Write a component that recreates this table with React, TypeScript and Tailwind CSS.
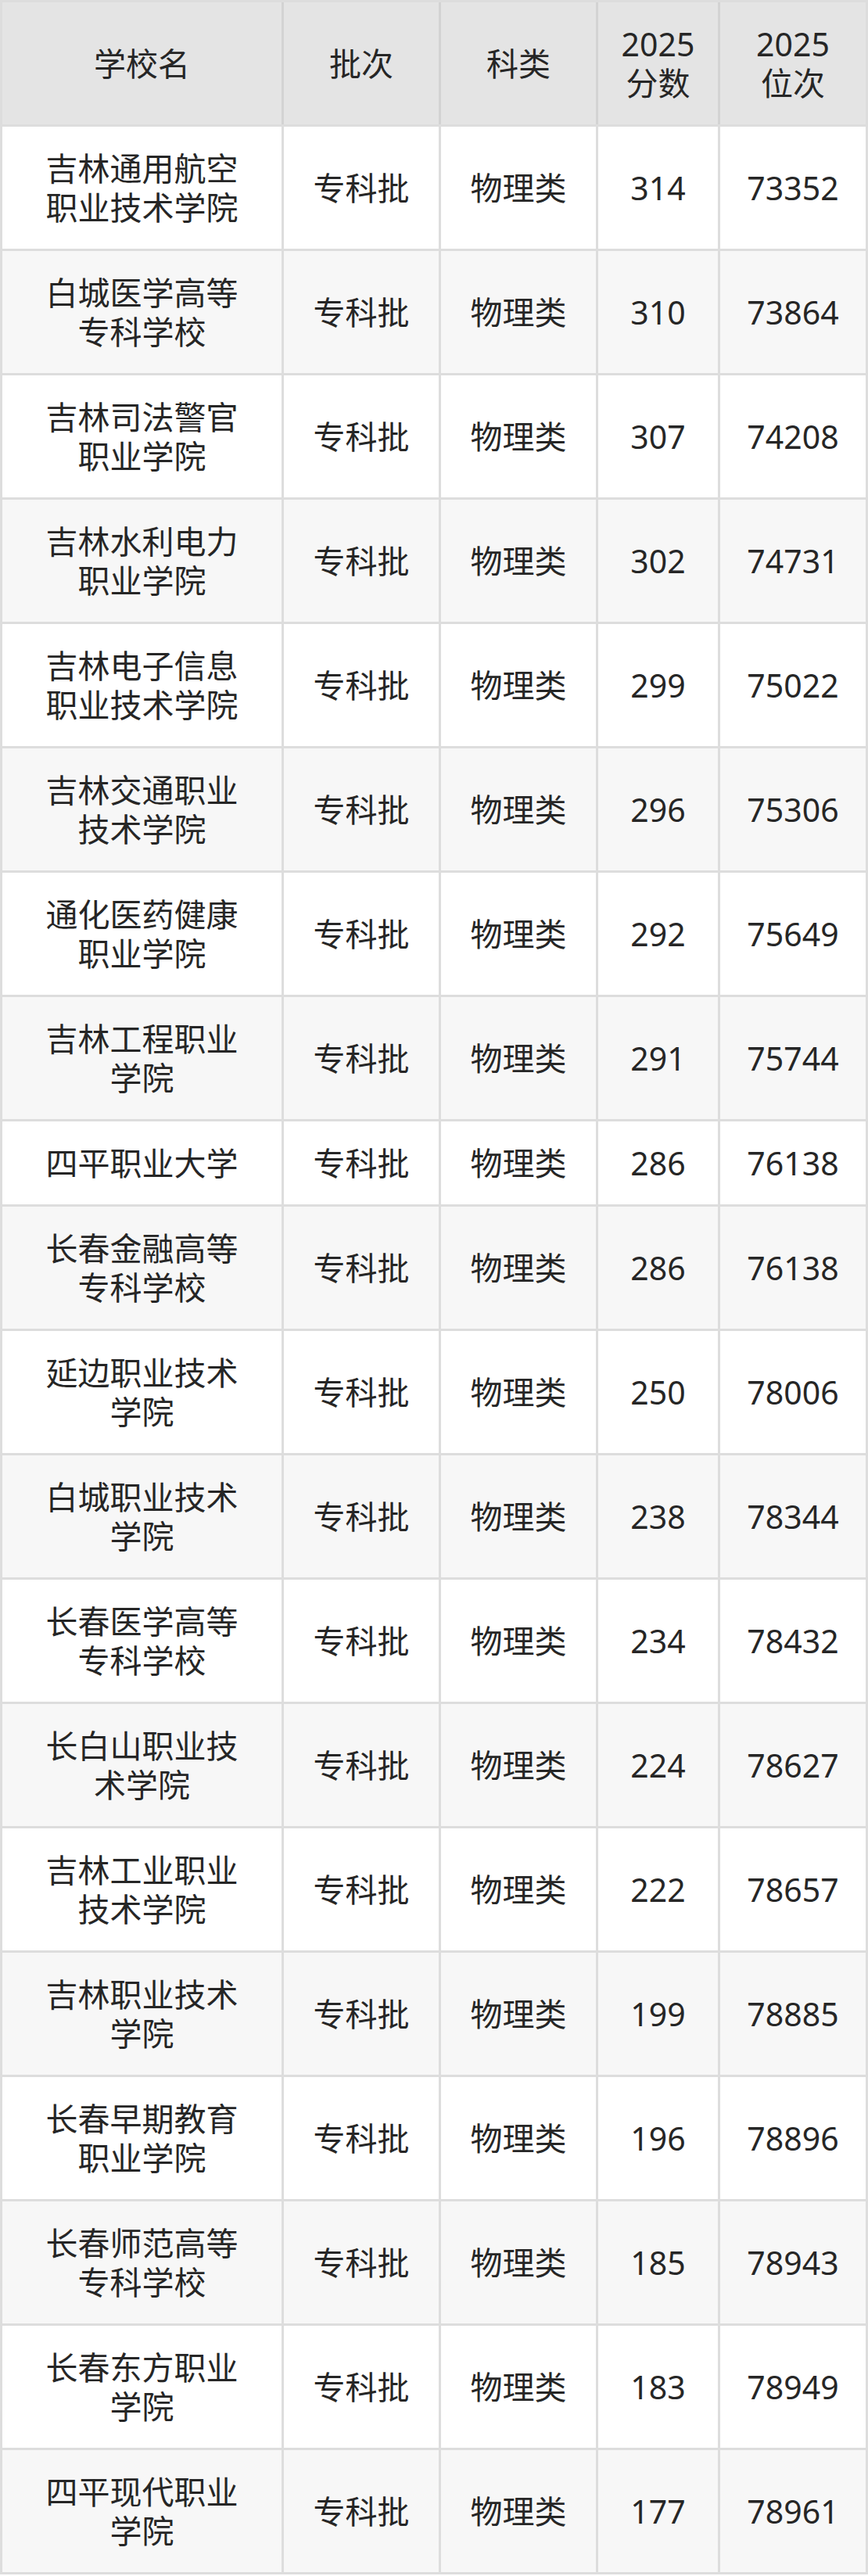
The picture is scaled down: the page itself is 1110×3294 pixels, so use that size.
import React from "react";

const rows: [string, string, string][] = [
  ["吉林通用航空职业技术学院", "314", "73352"],
  ["白城医学高等专科学校", "310", "73864"],
  ["吉林司法警官职业学院", "307", "74208"],
  ["吉林水利电力职业学院", "302", "74731"],
  ["吉林电子信息职业技术学院", "299", "75022"],
  ["吉林交通职业技术学院", "296", "75306"],
  ["通化医药健康职业学院", "292", "75649"],
  ["吉林工程职业学院", "291", "75744"],
  ["四平职业大学", "286", "76138"],
  ["长春金融高等专科学校", "286", "76138"],
  ["延边职业技术学院", "250", "78006"],
  ["白城职业技术学院", "238", "78344"],
  ["长春医学高等专科学校", "234", "78432"],
  ["长白山职业技术学院", "224", "78627"],
  ["吉林工业职业技术学院", "222", "78657"],
  ["吉林职业技术学院", "199", "78885"],
  ["长春早期教育职业学院", "196", "78896"],
  ["长春师范高等专科学校", "185", "78943"],
  ["长春东方职业学院", "183", "78949"],
  ["四平现代职业学院", "177", "78961"],
];

const grid = "grid grid-cols-[357px_198px_198px_153px_186px] gap-x-[3px]";
const cell = "flex items-center justify-center text-center py-[28px] leading-[50px]";

export default function App() {
  return (
    <div
      className="w-[1110px] bg-[#dddddd] p-[3px] flex flex-col gap-y-[3px] text-[41px] text-[#262626]"
      style={{ fontFamily: '"Noto Sans", "Noto Sans CJK SC", sans-serif' }}
    >
      <div className={`${grid} bg-[#d3d3d3]`}>
        <div className={`${cell} bg-[#e4e4e4] px-[40px]`}>学校名</div>
        <div className={`${cell} bg-[#e4e4e4]`}>批次</div>
        <div className={`${cell} bg-[#e4e4e4]`}>科类</div>
        <div className={`${cell} bg-[#e4e4e4]`}>
          2025
          <br />
          分数
        </div>
        <div className={`${cell} bg-[#e4e4e4]`}>
          2025
          <br />
          位次
        </div>
      </div>
      {rows.map(([name, score, rank], i) => {
        const bg = i % 2 === 0 ? "bg-white" : "bg-[#f7f7f7]";
        return (
          <div key={i} className={grid}>
            <div className={`${cell} ${bg} px-[46px]`}>{name}</div>
            <div className={`${cell} ${bg}`}>专科批</div>
            <div className={`${cell} ${bg}`}>物理类</div>
            <div className={`${cell} ${bg}`}>{score}</div>
            <div className={`${cell} ${bg}`}>{rank}</div>
          </div>
        );
      })}
    </div>
  );
}
